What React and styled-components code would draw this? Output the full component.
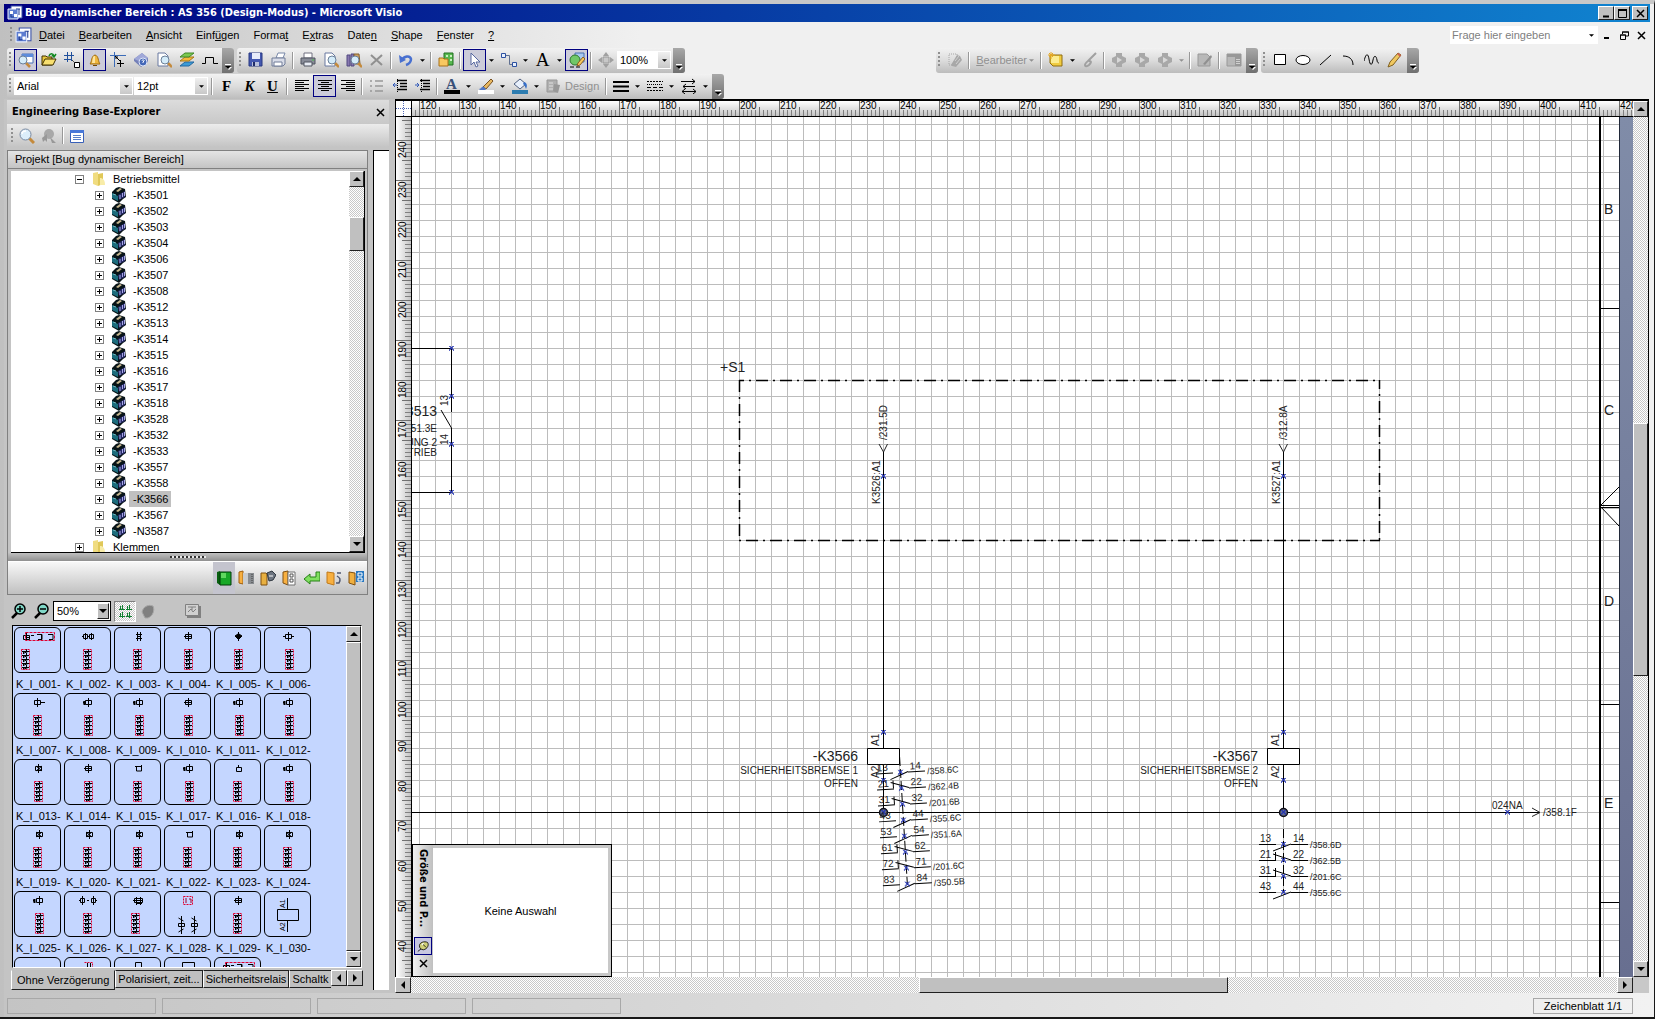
import React from 'react';
import styled, { createGlobalStyle, css } from 'styled-components';

const UI_FONT = '"Liberation Sans", Arial, sans-serif';
const BOLD_FONT = '"DejaVu Sans Condensed", Tahoma, "DejaVu Sans", sans-serif';

const menus = [
  '&Datei', '&Bearbeiten', '&Ansicht', 'Einf&ügen', 'Forma&t',
  'E&xtras', 'Date&n', '&Shape', '&Fenster', '&?',
];

const devices = [
  '-K3501', '-K3502', '-K3503', '-K3504', '-K3506', '-K3507', '-K3508', '-K3512',
  '-K3513', '-K3514', '-K3515', '-K3516', '-K3517', '-K3518', '-K3528', '-K3532',
  '-K3533', '-K3557', '-K3558', '-K3566', '-K3567', '-N3587',
];

// [label, symbol on top, x of symbol, x of the contact block]
const shapes = [
  ['K_I_001-', 'bus', 0, 7], ['K_I_002-', 'double', 24, 19], ['K_I_003-', 'hash', 25, 19],
  ['K_I_004-', 'coil', 24, 20], ['K_I_005-', 'solid', 24, 20], ['K_I_006-', 'wide', 24, 21],
  ['K_I_007-', 'right', 23, 19], ['K_I_008-', 'left', 24, 20], ['K_I_009-', 'left', 25, 21],
  ['K_I_010-', 'coil', 24, 20], ['K_I_011-', 'left', 25, 21], ['K_I_012-', 'left', 25, 21],
  ['K_I_013-', 'cross', 24, 20], ['K_I_014-', 'coil', 24, 20], ['K_I_015-', 'cup', 24, 19],
  ['K_I_017-', 'left', 25, 21], ['K_I_016-', 'box', 24, 19], ['K_I_018-', 'left', 25, 21],
  ['K_I_019-', 'cross', 25, 19], ['K_I_020-', 'cross', 25, 19], ['K_I_021-', 'cross', 25, 19],
  ['K_I_022-', 'cup', 25, 19], ['K_I_023-', 'cross', 25, 19], ['K_I_024-', 'cross', 25, 19],
  ['K_I_025-', 'left', 25, 21], ['K_I_026-', 'pair', 24, 19], ['K_I_027-', 'motor', 24, 17],
  ['K_I_028-', 'lamps', 24, 0], ['K_I_029-', 'coil', 24, 19], ['K_I_030-', 'relay', 0, 0],
  ['', 'none', 0, 0], ['', 'redcoil', 25, 0], ['', 'tall', 24, 0], ['', 'flat', 24, 0], ['', 'bus', 0, 0],
];

const contactsA = [
  ['13', '14', 'no', '/358.6C'], ['21', '22', 'nc', '/362.4B'], ['31', '32', 'nc', '/201.6B'],
  ['43', '44', 'no', '/355.6C'], ['53', '54', 'no', '/351.6A'], ['61', '62', 'nc', ''],
  ['72', '71', 'nc', '/201.6C'], ['83', '84', 'no', '/350.5B'],
];

const contactsB = [
  ['13', '14', 'no', '/358.6D'], ['21', '22', 'nc', '/362.5B'],
  ['31', '32', 'nc', '/201.6C'], ['43', '44', 'no', '/355.6C'],
];

const range = (from, to, step) => {
  const out = [];
  for (let v = from; step > 0 ? v <= to : v >= to; v += step) out.push(v);
  return out;
};

const gear = (
  <>
    <path d="M5 1h6v3l4 2v4l-4 2v3H5v-3L1 10V6l4-2z" fill="#a8a8a8" />
    <path d="M6 5l5 3-5 3z" fill="#d8d8d8" />
  </>
);

const lens = (x, y) => (
  <>
    <path d={`M${x + 3} ${y + 3}l4 4`} stroke="#c48a3c" strokeWidth="2.5" />
    <circle cx={x} cy={y} r="4" fill="#d4ecfa" stroke="#6c8098" />
  </>
);

const alignLines = (widths, place) => widths.map((w, i) => {
  const x = { left: 1, center: 8 - w / 2, right: 15 - w }[place];
  return <path key={i} d={`M${x} ${2.5 + i * 2}h${w}`} stroke="#000" />;
});

const icons = {
  app: (
    <>
      <path d="M4 1h11v12H4z" fill="#fff" stroke="#3850a8" />
      <path d="M1 4h10v10H1z" fill="#5c7cd0" stroke="#e8eefc" />
      <path d="M3 6h3v3H3zM7 9h3v3H7z" fill="#fff" />
      <path d="M9 4h4M12 4v6M4 9v3h3" stroke="#203c90" fill="none" />
    </>
  ),
  explorer: (
    <>
      <path d="M4 2h11v9H4z" fill="#fff" stroke="#4870b8" />
      <path d="M4 2h11v3H4z" fill="#5c8cdc" />
      {lens(5, 8)}
    </>
  ),
  open: (
    <>
      <path d="M1 4h4l1 1h5v8H1z" fill="#e8c83c" stroke="#403000" />
      <path d="M1 13l3-6h11l-3 6z" fill="#f8e070" stroke="#403000" />
      <path d="M8 4c1-3 4-3 5 0M11 3l2 2 2-3" fill="none" stroke="#108820" strokeWidth="1.5" />
    </>
  ),
  grid: (
    <>
      <path d="M0 3.5h10M0 7.5h8M3.5 0v10M7.5 0v9" stroke="#20509c" />
      <path d="M8 8l3 3" stroke="#000" strokeDasharray="1 1" />
      <path d="M10.5 10.5h5v5h-5z" fill="#fff" stroke="#000" />
    </>
  ),
  bell: (
    <>
      <path d="M3 12c2-2 1-8 5-9 4 1 3 7 5 9z" fill="#f0b840" stroke="#a06c10" />
      <path d="M6 5c1-1 1-1 2-1v7H5z" fill="#fce4a0" />
      <path d="M6 13h4v1H6z" fill="#704800" />
    </>
  ),
  snap: (
    <>
      <path d="M0 3.5h16M4.5 0v15" stroke="#3c6cb8" />
      <path d="M5 4l5 5M6 7V5h2" stroke="#000" fill="none" />
      <path d="M7 11.5h7M10.5 8v7" stroke="#000" />
    </>
  ),
  help: (
    <>
      <path d="M1 7l8-6 6 5v4l-7 5-7-6z" fill="#7480b8" />
      <path d="M1 7l8-6 6 5-7 4z" fill="#a0a8d8" />
      <circle cx="10" cy="10" r="4" fill="#4468b8" stroke="#dce4f8" />
      <path d="M9 9c0-2 3-1 2 0l-1 1v1" stroke="#fff" fill="none" />
    </>
  ),
  preview: (
    <>
      <path d="M2 1h7l3 3v10H2z" fill="#fff" stroke="#6878a0" />
      {lens(9, 8)}
    </>
  ),
  layers: (
    <>
      <path d="M1 14l5-4h9l-5 4z" fill="#3c9cd8" stroke="#2468a0" />
      <path d="M1 9l5-4h9l-5 4z" fill="#f4b83c" stroke="#a87818" />
      <path d="M1 5l5-4h9l-5 4z" fill="#7cc850" stroke="#408828" />
    </>
  ),
  pulse: <path d="M0 11.5h3.5v-6h8v6H16" fill="none" stroke="#000" />,
  save: (
    <>
      <path d="M1 1h13v13H1z" fill="#4458b0" stroke="#283880" />
      <path d="M4 1h8v6H4z" fill="#e8ecfa" />
      <path d="M4 10h7v4H4z" fill="#b8c0dc" />
      <path d="M5 10h2v4H5z" fill="#202c68" />
    </>
  ),
  printPage: (
    <>
      <path d="M5 6l2-5h7l-2 5z" fill="#fff" stroke="#7888a8" />
      <path d="M1 6h13v6l-2 2H1z" fill="#d8dce8" stroke="#707c98" />
      <path d="M3 10h8v4H3z" fill="#fff" stroke="#707c98" />
    </>
  ),
  printer: (
    <>
      <path d="M4 1h8v5H4z" fill="#fff" stroke="#707080" />
      <path d="M1 6h14v6H1z" fill="#888c98" stroke="#505460" />
      <path d="M4 10h8v4H4z" fill="#e8ecf4" stroke="#505460" />
      <path d="M12 8h2" stroke="#48c048" />
    </>
  ),
  research: (
    <>
      <path d="M1 3h3v11H1zM5 2h3v12H5z" fill="#8878b0" stroke="#504880" />
      <path d="M8 2h5l1 10H9z" fill="#d0a060" stroke="#806030" />
      {lens(9, 8)}
    </>
  ),
  cross: <path d="M2 3l11 10M13 3L2 13" stroke="#909090" strokeWidth="2" />,
  undo: (
    <>
      <path d="M4 8c2-4 8-5 9-1 0 3-2 5-5 6" fill="none" stroke="#4870d0" strokeWidth="2.5" />
      <path d="M1 3l1 8 6-3z" fill="#4870d0" />
    </>
  ),
  shapesWindow: (
    <>
      <path d="M6 1h9v12H6z" fill="#58b850" stroke="#207020" />
      <path d="M8 3h2v2H8zM12 3h2v2h-2zM12 7h2v2h-2z" fill="#c8f0c0" />
      <path d="M1 6h4l1 1h4v7H1z" fill="#f8c860" stroke="#a87018" />
    </>
  ),
  pointer: <path d="M4 1v12l3-3 2 5 2-1-2-4h4z" fill="#fff" stroke="#5868a0" />,
  connector: (
    <>
      <path d="M4 3.5h4.5v9H12" fill="none" stroke="#607090" />
      <path d="M.5 1.5h4v4h-4zM11.5 10.5h4v4h-4z" fill="#e8f0fc" stroke="#2c50a0" />
    </>
  ),
  drawTools: (
    <>
      <path d="M6 1h9v9H6z" fill="#a8c8f0" stroke="#4870b0" />
      <circle cx="6" cy="8" r="5" fill="#70c868" stroke="#307830" />
      <path d="M8 14l1-3 5-6 2 2-5 6z" fill="#f4c860" stroke="#906020" />
      <path d="M1 15h12" stroke="#000" strokeDasharray="4 2" />
    </>
  ),
  move: (
    <>
      <path d="M8 0l3 4H5zM8 16l3-4H5zM0 8l4-3v6zM16 8l-4-3v6z" fill="#a0a0a0" />
      <path d="M5 5h6v6H5z" fill="#c8c8c8" stroke="#989898" />
    </>
  ),
  stencil: (
    <>
      <path d="M2 2h8v11H2z" fill="none" stroke="#a8a8a8" strokeDasharray="1 1" />
      <path d="M4 13l6-10 3 1 2 4-6 7-4-1z" fill="#a8a8a8" />
      <path d="M8 9l4-5M9 12l4-5" stroke="#d0d0d0" />
    </>
  ),
  note: (
    <>
      <path d="M2 3h12v11H5l-3-3z" fill="#f0cc40" stroke="#906c10" />
      <path d="M3 4h8v7H3z" fill="#fcec90" />
      <path d="M3 0v7M0 3h7M1 1l4 4M5 1L1 5" stroke="#e8a820" />
    </>
  ),
  ink: <path d="M14 1L6 9c-5 4-3 7 1 4 2-2 3-4 0-4" fill="none" stroke="#a0a0a0" strokeWidth="2" />,
  prev: gear,
  editPage: (
    <>
      <path d="M1 2h9l3 3v9H1z" fill="#b8b8b8" stroke="#989898" />
      <path d="M6 12l8-9 1 2-7 8z" fill="#909090" />
    </>
  ),
  pane: (
    <>
      <path d="M1 2h14v12H1z" fill="#b8b8b8" stroke="#989898" />
      <path d="M9 5h6v9H9zM1 2h14v3H1z" fill="#989898" />
      <path d="M10 7.5h4M10 9.5h4M10 11.5h4" stroke="#d0d0d0" />
    </>
  ),
  rect: <path d="M2.5 2.5h11v10h-11z" fill="#fff" stroke="#000" />,
  ellipse: <ellipse cx="8" cy="8" rx="7" ry="4.5" fill="#fff" stroke="#000" />,
  line: <path d="M2 13L13 3" stroke="#000" />,
  arc: <path d="M2 4c6 0 10 3 10 9" fill="none" stroke="#000" />,
  wave: <path d="M0 9c2-8 4-8 5-2 1 7 3 7 4 1 1-5 3-5 4 0 0 2 1 3 2 3" fill="none" stroke="#000" />,
  pencil: (
    <>
      <path d="M1 15l2-5 8-9 3 2-8 10z" fill="#f0c860" stroke="#806020" />
      <path d="M10 2l1-1 3 2-1 2z" fill="#d06050" />
    </>
  ),
  alignLeft: alignLines([14, 9, 14, 9, 14, 9], 'left'),
  alignCenter: alignLines([14, 8, 14, 8, 14, 8], 'center'),
  alignRight: alignLines([14, 9, 14, 9, 14, 9], 'right'),
  bullets: <path d="M1 3h2M1 8h2M1 13h2M6 3h8M6 8h8M6 13h8" stroke="#989898" strokeWidth="1.5" />,
  outdent: (
    <>
      <path d="M5 2.5h10M8 5.5h7M8 8.5h7M5 11.5h10" stroke="#000" strokeWidth="1.5" />
      <path d="M5.5 1v14" stroke="#000" strokeDasharray="1 1" />
      <path d="M5 7H1M3 5L1 7l2 2" stroke="#3058b8" fill="none" />
    </>
  ),
  indent: (
    <>
      <path d="M5 2.5h10M8 5.5h7M8 8.5h7M5 11.5h10" stroke="#000" strokeWidth="1.5" />
      <path d="M6.5 1v14" stroke="#000" strokeDasharray="1 1" />
      <path d="M0 7h4M2 5l2 2-2 2" stroke="#3058b8" fill="none" />
    </>
  ),
  brush: (
    <>
      <path d="M5 9l8-8 2 2-7 8z" fill="#e8b860" stroke="#785020" />
      <path d="M1 11c3 0 2-3 5-2l2 2c-2 2-5 2-7 0z" fill="#5078c8" />
      <path d="M0 12h16v4H0z" fill="#fff" />
    </>
  ),
  bucket: (
    <>
      <path d="M2 6l6-5 6 5-6 5z" fill="#e8f0fc" stroke="#506080" />
      <path d="M12 4c4 1 3 5 2 7-1-2-1-4-3-5z" fill="#3870c8" />
      <path d="M0 12h16v4H0z" fill="#2c7cb0" />
    </>
  ),
  design: (
    <>
      <path d="M1 2h10v12H1z" fill="#b0b0b0" stroke="#989898" />
      <path d="M3 5h4M3 8h4M3 11h4" stroke="#e0e0e0" />
      <path d="M8 6l6 1-2 8-5-2z" fill="#989898" />
    </>
  ),
  weights: <path d="M0 4h16M0 8.5h16M0 13h16" stroke="#000" strokeWidth="2" />,
  dashes: (
    <>
      <path d="M0 3.5h16M0 12.5h16" stroke="#000" strokeDasharray="2 1" />
      <path d="M0 6.5h16" stroke="#000" strokeDasharray="1 1" />
      <path d="M0 9.5h16" stroke="#000" strokeDasharray="4 2" />
    </>
  ),
  arrows: (
    <path
      d="M0 3.5h14M11 1l3 2.5L11 6M2 8.5h12M5 6L2 8.5 5 11M1 13.5h14M12 11l3 2.5-3 2.5M4 11l-3 2.5L4 16"
      fill="none" stroke="#000"
    />
  ),
  find: (
    <>
      <path d="M10 10l5 5" stroke="#c48a3c" strokeWidth="3" />
      <circle cx="6.5" cy="6.5" r="5.5" fill="#dceefa" stroke="#7888a0" />
      <path d="M3 6c0-2 2-3 4-3" fill="none" stroke="#fff" strokeWidth="1.5" />
    </>
  ),
  bird: (
    <>
      <circle cx="8" cy="6" r="5" fill="#a8a8a8" />
      <path d="M1 10l5-4v8l-2-2-2 2zM9 9l6 6h-4z" fill="#989898" />
    </>
  ),
  list: (
    <>
      <path d="M1.5 2.5h13v12h-13z" fill="#fff" stroke="#3860b8" />
      <path d="M1 2h14v3H1z" fill="#4878d8" />
      <path d="M4 7.5h8M4 9.5h8M4 11.5h8" stroke="#5880c8" />
    </>
  ),
  folder: (
    <>
      <path d="M2 2l5-1v14l-5-2z" fill="#f0dc80" />
      <path d="M7 3l5-1v11l-5 2z" fill="#e0c858" />
      <path d="M9 7c3 0 5 2 5 7H9z" fill="#f8eca8" />
    </>
  ),
  device: (
    <>
      <path d="M1 5l4-4 3-1 6 2 1 8-3 2-4 4-7-4z" fill="#081418" />
      <path d="M1 6l6 3v5l-6-3z" fill="#1c6c7c" />
      <path d="M7 8l7-4v6l-6 3z" fill="#282c68" />
      <path d="M9 8v4M11.5 6v4M13.5 5v4" stroke="#a8a8e8" />
      <path d="M5 4l4-3 2 1-4 3z" fill="#c8b890" />
      <path d="M2 7l3 1" stroke="#70b8c0" />
    </>
  ),
  greenBook: (
    <>
      <path d="M1 2l3-1v14l-3-2z" fill="#086010" />
      <path d="M4 2h11v13H4z" fill="#18a828" stroke="#003c08" />
      <path d="M5 3h5v5H5z" fill="#60d860" />
    </>
  ),
  bookWipe: (
    <>
      <path d="M1 2l4-1v13l-4-1z" fill="#f8b040" stroke="#a06010" />
      <path d="M5 3h11v11H5z" fill="#888c90" />
      <path d="M5 3h5v11H5z" fill="#c8ccd0" />
      <path d="M14 4v9" stroke="#404040" strokeDasharray="1 1" />
    </>
  ),
  bookGear: (
    <>
      <path d="M1 3h5l1 1v11H1z" fill="#e8b040" stroke="#805010" />
      <path d="M7 3l5-2 4 4-3 5-4 1z" fill="#6c7480" stroke="#303840" />
      <path d="M9 6h4" stroke="#fff" />
    </>
  ),
  bookPlan: (
    <>
      <path d="M1 2l5-1v14l-5-2z" fill="#f8b040" stroke="#805010" />
      <path d="M6 2h7v13H6z" fill="#fff" stroke="#707070" />
      <path d="M8 4h3v3H8zM8 9h3v3H8z" fill="none" stroke="#505050" />
    </>
  ),
  back: <path d="M0 9l6-5v3h6V2h4v9H6v3z" fill="#80e060" stroke="#288018" />,
  bookBottle: (
    <>
      <path d="M1 2l7 1v12l-7-2z" fill="#f8b040" stroke="#c07818" />
      <path d="M11 3h4M11 6c3 2 4 3 2 7h-3" fill="none" stroke="#505870" strokeWidth="1.5" />
    </>
  ),
  bookBlue: (
    <>
      <path d="M1 2l6 1v12l-6-2z" fill="#f0b040" stroke="#805010" />
      <path d="M8 1h8v11H8z" fill="#2878c0" />
      <path d="M10 3h4v3h-4zM10 8h4v3h-4z" fill="none" stroke="#fff" />
    </>
  ),
  zoomIn: (
    <>
      <path d="M6 10l-5 5" stroke="#000" strokeWidth="2.5" />
      <circle cx="9" cy="6" r="5" fill="#80d8c8" stroke="#000" strokeWidth="1.5" />
      <path d="M6 6h6M9 3v6" stroke="#000" strokeWidth="1.5" />
    </>
  ),
  zoomOut: (
    <>
      <path d="M6 10l-5 5" stroke="#000" strokeWidth="2.5" />
      <circle cx="9" cy="6" r="5" fill="#80d8c8" stroke="#000" strokeWidth="1.5" />
      <path d="M6 6h6" stroke="#000" strokeWidth="1.5" />
    </>
  ),
  tiles: (
    <path
      d="M5.5 2v5M2 6.5h6M3.5 3v4M12.5 2v5M9 6.5h6M10.5 3v4M5.5 9v6M2 13.5h6M3.5 10v4M12.5 9v6M9 13.5h6M10.5 10v4"
      stroke="#108030"
    />
  ),
  rock: <path d="M2 9c1-5 6-8 11-6 2 4 0 10-5 12H5z" fill="#808080" stroke="#a8a8a8" />,
  stamp: (
    <>
      <path d="M2 3h14v12H2z" fill="#808080" />
      <path d="M.5 1.5h13v11H.5z" fill="#d0d0d0" stroke="#808080" />
      <path d="M3 4h8M3 9l3-3 2 3 3-3M7 4v3" stroke="#808080" fill="none" />
    </>
  ),
  pin: (
    <>
      <path d="M3 7c0-4 6-6 10-4 2 3 0 8-5 9-3 0-5-2-5-5z" fill="#d0d078" stroke="#000" />
      <path d="M1 14l4-3M7 5l4 4" stroke="#000" />
      <path d="M6 6l2-2" stroke="#fff" strokeWidth="1.5" />
    </>
  ),
};

function Icon({ name, size = 16 }) {
  return (
    <svg width={size} height={size} viewBox="0 0 16 16" aria-hidden="true">
      {icons[name]}
    </svg>
  );
}

const arrowPaths = {
  up: 'M4 0l4 4H0z',
  down: 'M0 0h8L4 4z',
  left: 'M0 4l4-4v8z',
  right: 'M0 0l4 4-4 4z',
};

function Arrow({ dir = 'down', small }) {
  const wide = dir === 'up' || dir === 'down';
  const k = small ? 0.65 : 1;
  const w = wide ? 8 : 4;
  const h = wide ? 4 : 8;
  return (
    <svg width={Math.round(w * k)} height={Math.round(h * k)} viewBox={`0 0 ${w} ${h}`} aria-hidden="true">
      <path d={arrowPaths[dir]} fill="currentColor" />
    </svg>
  );
}

function CloseGlyph() {
  return (
    <svg width="9" height="9" viewBox="0 0 9 9" aria-hidden="true">
      <path d="M1 1l7 7M8 1L1 8" stroke="#000" strokeWidth="1.5" />
    </svg>
  );
}

function ExpanderGlyph({ open }) {
  return (
    <svg width="7" height="7" aria-hidden="true">
      <path d={open ? 'M1 3.5h5' : 'M1 3.5h5M3.5 1v5'} stroke="#000" />
    </svg>
  );
}

function Mnemonic({ text }) {
  const at = text.indexOf('&');
  return (
    <>
      {text.slice(0, at)}
      <u>{text[at + 1]}</u>
      {text.slice(at + 2)}
    </>
  );
}

function Tool({ name, label, boxed, drop, disabled, children }) {
  return (
    <>
      <ToolButton type="button" aria-label={label || name} $boxed={boxed} disabled={disabled}>
        {children || <Icon name={name} />}
      </ToolButton>
      {drop && (
        <DropButton type="button" aria-label={`${label || name} options`} disabled={disabled}>
          <Arrow small />
        </DropButton>
      )}
    </>
  );
}

function Combo({ label, value, width, plain }) {
  return (
    <ComboBox $width={width} $plain={plain}>
      <select aria-label={label} defaultValue={value}>
        <option>{value}</option>
      </select>
      <ComboArrow $raised={plain}><Arrow small={!plain} /></ComboArrow>
    </ComboBox>
  );
}

function Overflow() {
  return (
    <OverflowButton type="button" aria-label="More buttons">
      <svg width="7" height="7" viewBox="0 0 7 7" aria-hidden="true">
        <path d="M0 .5h6" stroke="#fff" />
        <path d="M1 3h6L4 6z" fill="#fff" />
        <path d="M0 2h6L3 5z" fill="#000" />
      </svg>
    </OverflowButton>
  );
}

function ScrollBar({ horizontal, before, thumb, after }) {
  return (
    <Scroll $horizontal={horizontal}>
      <ScrollButton type="button" aria-label="Scroll back"><Arrow dir={horizontal ? 'left' : 'up'} /></ScrollButton>
      <ScrollGap $grow={before} />
      <ScrollThumb $grow={thumb} />
      <ScrollGap $grow={after} />
      <ScrollButton type="button" aria-label="Scroll on"><Arrow dir={horizontal ? 'right' : 'down'} /></ScrollButton>
    </Scroll>
  );
}

function CoilSymbol({ kind, x }) {
  const left = x - 2.5;
  const mid = x + 0.5;
  const body = <path d={`M${left} 7.5h6v4h-6z`} />;
  const stem = <path d={`M${mid} 5v9`} />;
  switch (kind) {
    case 'bus':
      return (
        <>
          <path d="M9.5 8.5h6v4h-6zM12.5 6v8M11 10.5h5M17 8.5h3M23 7.5h5v5h-4M34 7.5h5v5h-4M27.5 8v6" />
          <path d="M11.5 5.5h29v8h-29z" stroke="#e00030" strokeDasharray="3 1" />
        </>
      );
    case 'double': return <path d="M18 9.5h2M19.5 7.5h4v4h-4zM25.5 7.5h4v4h-4zM21.5 6v7M27.5 6v7M23 9.5h2" />;
    case 'hash': return <path d="M22 7.5h6M22 11.5h6M23.5 5v9M26.5 5v9M24 9.5h3" />;
    case 'solid': return <><path d="M21 9l3-2h1l3 2-3 3h-1z" fill="#000" />{stem}</>;
    case 'wide': return <>{body}{stem}<path d="M19 9.5h2M28 9.5h2" /></>;
    case 'right': return <>{body}{stem}<path d="M27 9.5h4" /></>;
    case 'left': return <>{body}{stem}<path d="M19 9.5h2M20.5 8v4" strokeWidth="2" /></>;
    case 'cross': return <>{body}{stem}<path d="M22 7l6 5M28 7l-6 5" /></>;
    case 'cup': return <path d={`M${x - 1.5} 7v5h5V6M${x - 3} 7.5h6`} />;
    case 'box': return <path d={`M${x - 1.5} 8.5h5v4h-5zM${mid} 6v2`} />;
    case 'pair': return <path d="M16.5 7.5h4v4h-4zM27.5 7.5h4v4h-4zM18.5 5v9M29.5 5v9M15 9.5h1M23 9.5h2M32 9.5h1" />;
    case 'motor': return <path d="M20.5 7.5h8v4h-8zM22.5 6v8M26.5 6v8M19 9.5h10M22 12.5h6" />;
    case 'coil': return <>{body}{stem}<path d={`M${x - 4} 9.5h8`} /></>;
    case 'redcoil': return <><path d="M21 10.5h8v4M23.5 6v9M26.5 6v9" /><path d="M20.5 5.5h8v10" stroke="#e00030" strokeDasharray="2 1" /></>;
    case 'tall': return <path d="M21.5 16V5.5h6V16" />;
    case 'flat': return <path d="M18.5 16V5.5h12V16" />;
    default: return null;
  }
}

function ShapePreview({ kind, x, blockX }) {
  return (
    <svg width="45" height="44" viewBox="1 1 45 44" fill="none" stroke="#000" aria-hidden="true">
      <CoilSymbol kind={kind} x={x} />
      {kind === 'lamps' && (
        <>
          <path d="M19.5 5.5h9v8h-9z" stroke="#e00030" strokeDasharray="2 1" />
          <path d="M22 7v5M25 8h2v4" stroke="#a00028" />
          {[17.5, 30.5].map((cx) => (
            <path key={cx} d={`M${cx} 25v18M${cx - 3} 32.5h6v3h-6zM${cx - 3} 27l5 3M${cx + 2} 38l-5 3`} />
          ))}
        </>
      )}
      {kind === 'relay' && (
        <>
          <path d="M13.5 18.5h21v11h-21zM23.5 7v11M23.5 30v11" />
          <RelayLabel x="-17" y="21">A1</RelayLabel>
          <RelayLabel x="-40" y="21">A2</RelayLabel>
        </>
      )}
      {blockX > 0 && (
        <>
          {[0, 4, 8, 12, 16].map((dy) => (
            <path key={dy} d={`M${blockX + 1} ${24.5 + dy}h7M${blockX + 2} ${26.5 + dy}l5-2`} />
          ))}
          <path d={`M${blockX + 5.5} 22v21M${blockX + 2.5} 24v18`} strokeDasharray="3 1" />
          <path d={`M${blockX + 0.5} 22.5h8v20h-8z`} stroke="#e00030" strokeDasharray="2 1" />
        </>
      )}
    </svg>
  );
}

const Mark = ({ x, y }) => (
  <path
    d={`M${x - 2} ${y - 2}l5 5M${x + 3} ${y - 2}l-5 5M${x - 1} ${y - 2}l4 4M${x + 2} ${y - 2}l-4 4`}
    stroke="#2434b0" strokeWidth="0.8"
  />
);

function Contacts({ rows, transform }) {
  return (
    <g transform={transform}>
      <path d={`M.5 -15v${rows.length * 16}`} stroke="#000" strokeDasharray="9 3" />
      {rows.map(([a, b, kind, target], i) => {
        const y = i * 16;
        return (
          <g key={a}>
            <path d={`M-24 ${y + 0.5}h17M8 ${y + 0.5}h17`} stroke="#000" />
            {kind === 'no'
              ? <path d={`M8 ${y}L-10 ${y + 7}`} stroke="#000" />
              : <path d={`M-7.5 ${y}v-8M8 ${y}L-10 ${y - 6}`} stroke="#000" />}
            <Mark x={0} y={y} />
            <SheetText x="-23" y={y - 2}>{a}</SheetText>
            <SheetText x="10" y={y - 2}>{b}</SheetText>
            <SheetText x="27" y={y + 4} $small>{target}</SheetText>
          </g>
        );
      })}
    </g>
  );
}

// One coil column, drawn around its wire at x = 0 with sheet heights for y
function Coil({ x, source, wire, name, title }) {
  return (
    <g transform={`translate(${x} 0)`}>
      <path d="M-4 444l4.5 8 4-8" fill="none" stroke="#222" />
      <path d="M.5 452v296M.5 764v48" stroke="#000" />
      <path d="M-15.5 748.5h32v16h-32z" fill="#fff" stroke="#000" />
      <SheetText transform="translate(4 440) rotate(-90)">{source}</SheetText>
      <SheetText transform="translate(-3 504) rotate(-90)">{wire}</SheetText>
      <SheetText transform="translate(-4 746) rotate(-90)">A1</SheetText>
      <SheetText transform="translate(-4 778) rotate(-90)">A2</SheetText>
      <SheetText x="-25" y="761" textAnchor="end" $large>{name}</SheetText>
      <SheetText x="-25" y="774" textAnchor="end">{title}</SheetText>
      <SheetText x="-25" y="787" textAnchor="end">OFFEN</SheetText>
      <circle cx=".5" cy="812.5" r="4" fill="#606890" stroke="#101018" strokeWidth="1.5" />
      <Mark x={0} y={476} />
      <Mark x={0} y={732} />
      <Mark x={0} y={780} />
      <Mark x={0} y={812} />
    </g>
  );
}

function Sheet() {
  return (
    <SheetSvg width="1207" height="1400" viewBox="412 117 1207 1400">
      <defs>
        <pattern id="grid" x="419" y="124" width="16" height="16" patternUnits="userSpaceOnUse">
          <path d="M.5 0v16M0 .5h16" stroke="#bcbcbc" />
        </pattern>
      </defs>
      <rect x="412" y="117" width="1207" height="1400" fill="#fff" />
      <rect x="412" y="117" width="1207" height="1400" fill="url(#grid)" />

      <path d="M1600 117v1400" stroke="#000" strokeWidth="2" />
      <path d="M1600 308.5h19M1600 704.5h19M1600 902.5h19M1600 505.5h19M1600 507.5h19" stroke="#000" />
      <path d="M1619 487l-19 19 19 20" fill="none" stroke="#000" />
      <SheetText x="1604" y="214" $large>B</SheetText>
      <SheetText x="1604" y="415" $large>C</SheetText>
      <SheetText x="1604" y="606" $large>D</SheetText>
      <SheetText x="1604" y="808" $large>E</SheetText>

      <path d="M412 348.5h39.5V412M441 410l10.5 18V492.5H412" fill="none" stroke="#000" />
      <SheetText x="437" y="416" textAnchor="end" $large>-K3513</SheetText>
      <SheetText x="437" y="432" textAnchor="end">/351.3E</SheetText>
      <SheetText x="437" y="446" textAnchor="end">RICHTUNG 2</SheetText>
      <SheetText x="437" y="456" textAnchor="end">BETRIEB</SheetText>
      <SheetText transform="translate(448 406) rotate(-90)">13</SheetText>
      <SheetText transform="translate(448 445) rotate(-90)">14</SheetText>
      {[348, 396, 444, 492].map((y) => <Mark key={y} x={451} y={y} />)}

      <g stroke="#000" strokeWidth="1.5" strokeDasharray="12 5 2 5">
        <path d="M739 380.5h641" strokeDashoffset="7" />
        <path d="M739 540.5h641" strokeDashoffset="17" />
        <path d="M739.5 380v161" />
        <path d="M1379.5 380v161" strokeDashoffset="3" />
      </g>
      <SheetText x="720" y="372" $large>+S1</SheetText>

      <path d="M412 812.5h1128" stroke="#000" />
      <path d="M1532 808l8 4.5-8 4" fill="none" stroke="#222" />
      <SheetText x="1492" y="809">024NA</SheetText>
      <SheetText x="1543" y="816">/358.1F</SheetText>
      <Mark x={1507} y={812} />

      <Coil x={883} source="/231.5D" wire="K3526:A1" name="-K3566" title="SICHERHEITSBREMSE 1" />
      <Coil x={1283} source="/312.8A" wire="K3527:A1" name="-K3567" title="SICHERHEITSBREMSE 2" />
      <Contacts rows={contactsA} transform="translate(900 772) rotate(-3.5)" />
      <Contacts rows={contactsB} transform="translate(1283 844)" />
    </SheetSvg>
  );
}

function Toolbars() {
  return (
    <ToolArea>
      <ToolRow>
        <ToolBar>
          <Grip />
          <Tool name="explorer" boxed />
          <Tool name="open" />
          <Tool name="grid" />
          <Tool name="bell" boxed />
          <Tool name="snap" />
          <Tool name="help" />
          <Tool name="preview" />
          <Tool name="layers" />
          <Tool name="pulse" />
          <Overflow />
        </ToolBar>
        <ToolBar>
          <Grip />
          <Tool name="save" />
          <Tool name="printPage" />
          <Separator />
          <Tool name="printer" />
          <Tool name="preview" />
          <Tool name="research" />
          <Tool name="cross" disabled />
          <Separator />
          <Tool name="undo" drop />
          <Separator />
          <Tool name="shapesWindow" />
          <Separator />
          <Tool name="pointer" boxed drop />
          <Tool name="connector" drop />
          <Tool label="Text" drop><Letter $size={19}>A</Letter></Tool>
          <Tool name="drawTools" boxed />
          <Separator />
          <Tool name="move" disabled />
          <Combo label="Zoom" value="100%" width={54} />
          <Overflow />
        </ToolBar>
        <Push />
        <ToolBar>
          <Grip />
          <Tool name="stencil" disabled />
          <Separator />
          <TextButton type="button" disabled><Mnemonic text="&Bearbeiter" /><Arrow small /></TextButton>
          <Separator />
          <Tool name="note" drop />
          <Tool name="ink" disabled />
          <Separator />
          <Tool name="prev" disabled />
          <Tool name="prev" label="next" disabled />
          <Tool name="prev" label="reject" disabled drop />
          <Separator />
          <Tool name="editPage" disabled />
          <Separator />
          <Tool name="pane" disabled />
          <Overflow />
        </ToolBar>
        <ToolBar $last>
          <Grip />
          <Tool name="rect" />
          <Tool name="ellipse" />
          <Tool name="line" />
          <Tool name="arc" />
          <Tool name="wave" />
          <Tool name="pencil" />
          <Overflow />
        </ToolBar>
      </ToolRow>
      <ToolRow>
        <ToolBar>
          <Grip />
          <Combo label="Font" value="Arial" width={119} />
          <Combo label="Font size" value="12pt" width={74} />
          <Separator />
          <Tool label="Bold"><Letter $bold>F</Letter></Tool>
          <Tool label="Italic"><Letter $bold $italic>K</Letter></Tool>
          <Tool label="Underline"><Letter $bold><u>U</u></Letter></Tool>
          <Separator />
          <Tool name="alignLeft" />
          <Tool name="alignCenter" boxed />
          <Tool name="alignRight" />
          <Separator />
          <Tool name="bullets" disabled />
          <Tool name="outdent" />
          <Tool name="indent" />
          <Separator />
          <Tool label="Font color" drop><ColorLetter>A</ColorLetter></Tool>
          <Tool name="brush" drop />
          <Tool name="bucket" drop />
          <TextButton type="button" disabled><Icon name="design" /><Mnemonic text="Desi&gn" /></TextButton>
          <Separator />
          <Tool name="weights" drop />
          <Tool name="dashes" drop />
          <Tool name="arrows" drop />
          <Overflow />
        </ToolBar>
      </ToolRow>
    </ToolArea>
  );
}

function Explorer() {
  return (
    <Sidebar>
      <PanelHeader>
        <PanelTitle>Engineering Base-Explorer</PanelTitle>
        <PlainButton type="button" aria-label="Close panel"><CloseGlyph /></PlainButton>
      </PanelHeader>
      <PanelTools>
        <Grip />
        <Tool name="find" />
        <Tool name="bird" disabled />
        <Separator />
        <Tool name="list" />
      </PanelTools>
      <SidebarBody>
        <SidebarMain>
          <TreePane>
            <ProjectTitle>Projekt [Bug dynamischer Bereich]</ProjectTitle>
            <TreeFrame>
              <Tree>
                <TreeRow>
                  <Expander type="button" aria-label="Collapse"><ExpanderGlyph open /></Expander>
                  <Icon name="folder" />
                  <TreeLabel>Betriebsmittel</TreeLabel>
                </TreeRow>
                {devices.map((name) => (
                  <TreeRow key={name} $nested>
                    <Expander type="button" aria-label="Expand"><ExpanderGlyph /></Expander>
                    <Icon name="device" />
                    <TreeLabel $selected={name === '-K3566'}>{name}</TreeLabel>
                  </TreeRow>
                ))}
                <TreeRow>
                  <Expander type="button" aria-label="Expand"><ExpanderGlyph /></Expander>
                  <Icon name="folder" />
                  <TreeLabel>Klemmen</TreeLabel>
                </TreeRow>
              </Tree>
              <ScrollBar before={30} thumb={33} after={287} />
            </TreeFrame>
            <Splitter />
            <BookBar>
              <Tool name="greenBook" />
              <Tool name="bookWipe" />
              <Tool name="bookGear" />
              <Tool name="bookPlan" />
              <Tool name="back" />
              <Tool name="bookBottle" />
              <Tool name="bookBlue" />
            </BookBar>
          </TreePane>
          <ShapeTools>
            <Tool name="zoomIn" />
            <Tool name="zoomOut" />
            <Combo label="Preview zoom" value="50%" width={58} plain />
            <SunkenButton type="button" aria-label="Tiles"><Icon name="tiles" /></SunkenButton>
            <Tool name="rock" disabled />
            <ShapeGap />
            <Tool name="stamp" disabled />
          </ShapeTools>
          <ShapePane>
            <ShapeGrid>
              {shapes.map(([label, kind, x, blockX], i) => (
                <ShapeItem key={i}>
                  <ShapeCard><ShapePreview kind={kind} x={x} blockX={blockX} /></ShapeCard>
                  <span>{label}</span>
                </ShapeItem>
              ))}
            </ShapeGrid>
            <ScrollBar before={0} thumb={308} after={0} />
          </ShapePane>
          <Tabs>
            <Tab type="button" $active>Ohne Verzögerung</Tab>
            <Tab type="button">Polarisiert, zeit...</Tab>
            <Tab type="button">Sicherheitsrelais</Tab>
            <Tab type="button" $cut>Schaltk</Tab>
            <ScrollButton type="button" aria-label="Previous tabs"><Arrow dir="left" /></ScrollButton>
            <ScrollButton type="button" aria-label="Next tabs"><Arrow dir="right" /></ScrollButton>
          </Tabs>
        </SidebarMain>
        <Gutter />
      </SidebarBody>
    </Sidebar>
  );
}

export default function App() {
  return (
    <Frame>
      <GlobalStyle />
      <TitleBar>
        <Icon name="app" />
        <TitleText>Bug dynamischer Bereich : AS 356 (Design-Modus) - Microsoft Visio</TitleText>
        <CaptionButton type="button" aria-label="Minimize"><svg width="9" height="9"><path d="M1 7.5h6" stroke="#000" strokeWidth="2" /></svg></CaptionButton>
        <CaptionButton type="button" aria-label="Maximize"><svg width="9" height="9"><path d="M.5 1h8v7.5h-8z" fill="none" stroke="#000" /><path d="M0 1h9" stroke="#000" strokeWidth="2" /></svg></CaptionButton>
        <CaptionButton type="button" aria-label="Close" $apart><CloseGlyph /></CaptionButton>
      </TitleBar>

      <MenuBar>
        <Grip />
        <Icon name="app" size={17} />
        {menus.map((m) => <MenuItem key={m} type="button"><Mnemonic text={m} /></MenuItem>)}
        <Push />
        <Question>
          <input type="text" aria-label="Frage hier eingeben" placeholder="Frage hier eingeben" />
          <Arrow small />
        </Question>
        <PlainButton type="button" aria-label="Minimize document"><svg width="9" height="9"><path d="M1 7h5" stroke="#000" strokeWidth="2" /></svg></PlainButton>
        <PlainButton type="button" aria-label="Restore document"><svg width="9" height="9"><path d="M2.5 3V1h6v4H6M.5 4h5v4.5h-5zM0 4h6M2 1h7" fill="none" stroke="#000" /></svg></PlainButton>
        <PlainButton type="button" aria-label="Close document"><CloseGlyph /></PlainButton>
      </MenuBar>

      <Toolbars />

      <Main>
        <Explorer />
        <DrawingWindow>
          <RulerCorner />
          <TopRuler>
            {range(120, 420, 10).map((n) => <TopLabel key={n}>{n}</TopLabel>)}
          </TopRuler>
          <SideRuler>
            {range(240, 40, -10).map((n) => <SideLabel key={n}>{n}</SideLabel>)}
          </SideRuler>
          <Canvas>
            <Sheet />
            <SizeWindow>
              <SizeHeader>
                <SizeTitle>Größe und P...</SizeTitle>
                <PinButton type="button" aria-label="Pin"><Icon name="pin" size={13} /></PinButton>
                <PlainButton type="button" aria-label="Close window"><CloseGlyph /></PlainButton>
              </SizeHeader>
              <SizeBody>Keine Auswahl</SizeBody>
            </SizeWindow>
          </Canvas>
          <VerticalScroll><ScrollBar before={307} thumb={252} after={286} /></VerticalScroll>
          <HorizontalScroll><ScrollBar horizontal before={509} thumb={308} after={390} /></HorizontalScroll>
        </DrawingWindow>
      </Main>

      <StatusBar>
        <StatusCell />
        <StatusCell />
        <StatusCell />
        <StatusCell />
        <Push />
        <StatusCell $page>Zeichenblatt 1/1</StatusCell>
      </StatusBar>
    </Frame>
  );
}

const GlobalStyle = createGlobalStyle`
  body {
    margin: 0;
    overflow: hidden;
  }

  *, *::before, *::after {
    box-sizing: border-box;
  }

  button, input, select {
    margin: 0;
    padding: 0;
    border: 0;
    border-radius: 0;
    background: none;
    color: inherit;
    font: inherit;
    outline: none;
  }

  svg {
    display: block;
    flex: none;
  }
`;

const raised = css`
  border: 1px solid;
  border-color: #fff #202020 #202020 #fff;
  background: #c0c0c0;
`;

const dither = css`
  background: repeating-conic-gradient(#fff 0 25%, #c8c8c8 0 50%) 0 0 / 2px 2px;
`;

const Frame = styled.div`
  display: flex;
  flex-direction: column;
  height: 100vh;
  padding: 0 4px;
  border-top: 4px solid #c8c8c8;
  border-bottom: 2px solid #181818;
  border-right: 1px solid #181818;
  background: linear-gradient(90deg, #c0c0c0, #f0f0f0 640px);
  font: 11px/16px ${UI_FONT};
  color: #000;
`;

const TitleBar = styled.header`
  display: flex;
  align-items: center;
  flex: none;
  height: 18px;
  padding: 0 2px 0 3px;
  background: linear-gradient(90deg, #000080, #1084d0);
  color: #fff;
`;

const TitleText = styled.h1`
  flex: 1;
  margin: 0 0 0 2px;
  font: bold 11px/18px ${BOLD_FONT};
  white-space: nowrap;
`;

const CaptionButton = styled.button`
  ${raised}
  display: flex;
  align-items: center;
  justify-content: center;
  width: 16px;
  height: 14px;
  margin-left: ${(props) => (props.$apart ? '2px' : 0)};
`;

const MenuBar = styled.nav`
  display: flex;
  align-items: center;
  flex: none;
  height: 24px;
  padding: 2px 0 0 6px;
`;

const MenuItem = styled.button`
  padding: 0 7px;
`;

const Push = styled.div`
  flex: 1;
`;

const Question = styled.label`
  display: flex;
  align-items: center;
  width: 148px;
  height: 18px;
  padding: 0 4px 0 2px;
  margin-right: 1px;
  background: #fff;

  input {
    flex: 1;
    min-width: 0;
  }

  input::placeholder {
    color: #808080;
    opacity: 1;
  }
`;

const PlainButton = styled.button`
  display: flex;
  align-items: center;
  justify-content: center;
  width: 17px;
  height: 17px;
`;

const ToolArea = styled.div`
  display: flex;
  flex-direction: column;
  flex: none;
  gap: 1px;
  padding: 2px 0 0 3px;
`;

const ToolRow = styled.div`
  display: flex;
  gap: 3px;
`;

const ToolBar = styled.div`
  display: flex;
  align-items: center;
  height: 25px;
  margin-right: ${(props) => (props.$last ? '231px' : 0)};
  padding: 0 0 1px 2px;
  border-radius: 3px;
  background: linear-gradient(#f2f2f2, #dcdcdc 50%, #bcbcbc);
`;

const Grip = styled.span`
  flex: none;
  width: 2px;
  height: 16px;
  margin-right: 3px;
  background: repeating-linear-gradient(#909090 0 2px, transparent 2px 4px);
`;

const Separator = styled.span`
  flex: none;
  width: 2px;
  height: 17px;
  margin: 0 2px;
  border-left: 1px solid #989898;
  border-right: 1px solid #fff;
`;

const ToolButton = styled.button`
  display: flex;
  align-items: center;
  justify-content: center;
  flex: none;
  width: 23px;
  height: 22px;
  border: 1px solid transparent;

  ${(props) =>
    props.$boxed &&
    css`
      border-color: #000080;
      background: #ccccda;
    `}
`;

const DropButton = styled.button`
  display: flex;
  align-items: center;
  justify-content: center;
  flex: none;
  width: 11px;
  height: 22px;

  &:disabled {
    color: #909090;
  }
`;

const TextButton = styled.button`
  display: flex;
  align-items: center;
  height: 22px;
  padding: 0 4px;
  white-space: nowrap;

  &:disabled {
    color: #909090;
  }

  svg:first-child {
    margin-right: 3px;
  }

  svg:last-child {
    margin-left: 2px;
  }
`;

const OverflowButton = styled.button`
  display: flex;
  align-items: flex-end;
  justify-content: center;
  width: 12px;
  height: 25px;
  margin: 0 0 -1px 1px;
  padding-bottom: 2px;
  border-radius: 0 3px 3px 0;
  background: linear-gradient(#a8a8a8, #707070);
`;

const Letter = styled.span`
  font-family: "Liberation Serif", serif;
  font-size: ${(props) => props.$size || 15}px;
  font-weight: ${(props) => (props.$bold ? 'bold' : 'normal')};
  font-style: ${(props) => (props.$italic ? 'italic' : 'normal')};
`;

const ColorLetter = styled.span`
  width: 16px;
  height: 16px;
  border-bottom: 4px solid #000;
  color: #385078;
  font: bold 15px/12px "Liberation Serif", serif;
`;

const ComboBox = styled.div`
  display: grid;
  grid-template-columns: 1fr 14px;
  flex: none;
  width: ${(props) => props.$width}px;
  height: ${(props) => (props.$plain ? 20 : 18)}px;
  margin-right: 1px;
  border: ${(props) => (props.$plain ? '1px solid #000' : 0)};
  background: #fff;

  select {
    grid-area: 1 / 1 / 2 / 3;
    padding-left: 3px;
    appearance: none;
  }
`;

const ComboArrow = styled.span`
  display: flex;
  align-items: center;
  justify-content: center;
  grid-area: 1 / 2;
  margin: 1px;
  background: linear-gradient(#f0f0f0, #c8c8c8);
  pointer-events: none;

  ${(props) => props.$raised && raised}
`;

const Main = styled.main`
  display: flex;
  flex: 1;
  min-height: 0;
`;

const Sidebar = styled.aside`
  display: flex;
  flex-direction: column;
  flex: none;
  width: 391px;
  padding: 1px 6px 3px 3px;
  background: #c4c4c4;
`;

const PanelHeader = styled.div`
  display: flex;
  align-items: center;
  justify-content: space-between;
  height: 24px;
  padding-left: 5px;
  background: linear-gradient(#dcdcdc, #c8c8c8);
`;

const PanelTitle = styled.h2`
  margin: 0;
  font: bold 11px/22px ${BOLD_FONT};
`;

const PanelTools = styled.div`
  display: flex;
  align-items: center;
  height: 23px;
  margin-bottom: 3px;
  padding-left: 4px;
  background: linear-gradient(#ececec, #c4c4c4);

  button {
    width: 22px;
  }
`;

const SidebarBody = styled.div`
  display: flex;
  flex: 1;
  gap: 5px;
  min-height: 0;
`;

const SidebarMain = styled.div`
  display: flex;
  flex-direction: column;
  flex: 1;
  min-width: 0;
`;

const Gutter = styled.div`
  width: 16px;
  border-top: 1px solid #000;
  border-left: 1px solid #000;
  background: #fff;
`;

const TreePane = styled.section`
  display: flex;
  flex: 447 1 0;
  flex-direction: column;
  min-height: 0;
  border: 1px solid #808080;
`;

const ProjectTitle = styled.div`
  flex: none;
  height: 18px;
  padding-left: 7px;
  border-bottom: 1px solid #808080;
  background: linear-gradient(#e4e4e4, #c4c4c4);
  line-height: 17px;
`;

const TreeFrame = styled.div`
  display: flex;
  flex: 1;
  min-height: 0;
  margin: 2px 2px 0 3px;
  border-right: 1px solid #000;
  border-bottom: 1px solid #000;
  background: #fff;
`;

const Tree = styled.ul`
  flex: 1;
  margin: 0;
  padding: 0;
  overflow: hidden;
  list-style: none;
`;

const TreeRow = styled.li`
  display: flex;
  align-items: center;
  height: 16px;
  padding-left: ${(props) => (props.$nested ? 84 : 64)}px;

  button + svg {
    margin: 0 2px 0 7px;
  }
`;

const TreeLabel = styled.span`
  padding: 0 3px 0 4px;
  background: ${(props) => (props.$selected ? '#c0c0c0' : 'none')};
`;

const Expander = styled.button`
  flex: none;
  width: 9px;
  height: 9px;
  border: 1px solid #808080;
`;

const Splitter = styled.div`
  flex: none;
  height: 8px;
  background: linear-gradient(#c0c0c0, #909090);

  &::after {
    content: '';
    display: block;
    width: 36px;
    height: 2px;
    margin: 3px auto 0;
    background: repeating-linear-gradient(90deg, #303030 0 2px, #e8e8e8 2px 4px);
  }
`;

const BookBar = styled.div`
  display: flex;
  align-items: center;
  justify-content: flex-end;
  flex: none;
  height: 33px;
  border-top: 1px solid #fff;
  background: linear-gradient(#f8f8f8, #c0c0c0);

  button {
    width: 22px;
  }

  button:first-child {
    height: 32px;
    background: #c4c4ce;
  }
`;

const ShapeTools = styled.div`
  display: flex;
  align-items: center;
  flex: none;
  height: 30px;
  padding-top: 2px;
`;

const SunkenButton = styled.button`
  ${dither}
  display: flex;
  align-items: center;
  justify-content: center;
  width: 22px;
  height: 21px;
  margin-left: 2px;
  border: 1px solid;
  border-color: #808080 #fff #fff #808080;
`;

const ShapeGap = styled.div`
  width: 22px;
`;

const ShapePane = styled.div`
  display: flex;
  flex: 344 1 0;
  min-height: 0;
  margin: 0 6px 0 5px;
  border: 1px solid;
  border-color: #000 #fff #fff #000;
  background: #c4d6ff;
`;

const ShapeGrid = styled.div`
  display: grid;
  grid-template-columns: repeat(auto-fill, 50px);
  grid-auto-rows: 66px;
  align-content: start;
  flex: 1;
  overflow: hidden;
  padding: 1px 0 0 1px;
`;

const ShapeItem = styled.div`
  display: flex;
  flex-direction: column;
  gap: 3px;

  span {
    padding-left: 2px;
    white-space: nowrap;
  }
`;

const ShapeCard = styled.div`
  flex: none;
  width: 47px;
  height: 46px;
  border: 1px solid #000;
  border-radius: 6px;
`;

const Tabs = styled.div`
  display: flex;
  flex: none;
  height: 22px;
  margin: 0 5px 0 4px;
  padding-top: 2px;
`;

const Tab = styled.button`
  ${raised}
  flex: none;
  height: ${(props) => (props.$active ? 20 : 18)}px;
  padding: 0 ${(props) => (props.$active ? 5 : 2)}px;
  border-top-color: ${(props) => (props.$active ? '#c0c0c0' : '#202020')};
  white-space: nowrap;

  ${(props) =>
    props.$cut &&
    css`
      flex: 1;
      min-width: 0;
      padding-right: 0;
      overflow: hidden;
      border-right: 0;
      text-align: left;
    `}
`;

const Scroll = styled.div`
  ${dither}
  display: flex;
  flex-direction: ${(props) => (props.$horizontal ? 'row' : 'column')};
  flex: none;
  ${(props) => (props.$horizontal ? 'height: 16px;' : 'width: 15px;')}
`;

const ScrollButton = styled.button`
  ${raised}
  display: flex;
  align-items: center;
  justify-content: center;
  flex: none;
  width: 16px;
  height: 16px;
  max-width: 100%;
`;

const ScrollGap = styled.div`
  flex: ${(props) => props.$grow} 1 0;
`;

const ScrollThumb = styled.div`
  ${raised}
  flex: ${(props) => props.$grow} 1 0;
`;

const DrawingWindow = styled.section`
  display: grid;
  grid-template-columns: 17px minmax(0, 1fr) 16px;
  grid-template-rows: 18px minmax(0, 1fr) 16px;
  flex: 1;
  min-width: 0;
  margin-right: 1px;
  background: #c8c8c8;
`;

const RulerCorner = styled.div`
  border: 1px solid #000;
  border-top-width: 2px;
  background:
    repeating-linear-gradient(90deg, #5068b8 0 1px, transparent 1px 2px) center / 100% 1px no-repeat,
    repeating-linear-gradient(#5068b8 0 1px, transparent 1px 2px) center / 1px 100% no-repeat,
    #fff;
`;

const TopRuler = styled.div`
  display: flex;
  padding-left: 7px;
  overflow: hidden;
  border-top: 2px solid #000;
  border-bottom: 1px solid #000;
  background:
    linear-gradient(90deg, #707070 1px, transparent 1px) 7px 0 / 40px 100%,
    linear-gradient(90deg, #707070 1px, transparent 1px) 27px 100% / 40px 9px repeat-x,
    linear-gradient(90deg, #808080 1px, transparent 1px) 3px 100% / 4px 6px repeat-x,
    linear-gradient(#fff, #c4c4c4);
`;

const TopLabel = styled.span`
  flex: none;
  width: 40px;
  padding-left: 1px;
  font-size: 10px;
  line-height: 10px;
`;

const SideRuler = styled.div`
  display: flex;
  flex-direction: column;
  grid-column: 1;
  padding-top: 23px;
  overflow: hidden;
  border-left: 1px solid #000;
  border-right: 1px solid #000;
  background:
    linear-gradient(#707070 1px, transparent 1px) 0 23px / 100% 40px,
    linear-gradient(#707070 1px, transparent 1px) 100% 43px / 9px 40px repeat-y,
    linear-gradient(#808080 1px, transparent 1px) 100% 3px / 6px 4px repeat-y,
    linear-gradient(90deg, #fff, #c4c4c4);
`;

const SideLabel = styled.span`
  flex: none;
  width: 14px;
  height: 40px;
  padding-bottom: 1px;
  font-size: 10px;
  line-height: 14px;
  text-align: right;
  writing-mode: vertical-rl;
  transform: rotate(180deg);
`;

const Canvas = styled.div`
  position: relative;
  overflow: hidden;
  background: linear-gradient(#808ca8, #686f90);
`;

const SheetSvg = styled.svg`
  border-right: 1px solid #202838;
  box-sizing: content-box;
`;

const SheetText = styled.text`
  fill: #222;
  stroke: none;
  font-family: ${UI_FONT};
  font-size: ${(props) => (props.$large ? 14 : props.$small ? 9 : 10)}px;
`;

const RelayLabel = styled.text`
  transform: rotate(-90deg);
  fill: #000;
  stroke: none;
  font: 7px ${UI_FONT};
`;

const VerticalScroll = styled.div`
  display: flex;
  grid-area: 1 / 3 / 3 / 4;
  border-top: 2px solid #000;
  border-right: 1px solid #000;
`;

const HorizontalScroll = styled.div`
  grid-area: 3 / 1 / 4 / 3;
`;

const SizeWindow = styled.div`
  position: absolute;
  left: 0;
  bottom: 0;
  display: flex;
  width: 200px;
  height: 133px;
  border: 1px solid #000;
  background: #c8c8c8;
`;

const SizeHeader = styled.div`
  display: flex;
  flex-direction: column;
  align-items: center;
  width: 20px;
  padding: 4px 0;
  background: linear-gradient(90deg, #f0f0f0, #c0c0c0);
`;

const SizeTitle = styled.h2`
  flex: 1;
  margin: 0;
  font: bold 11px/18px ${BOLD_FONT};
  white-space: nowrap;
  writing-mode: vertical-rl;
`;

const PinButton = styled.button`
  display: flex;
  align-items: center;
  justify-content: center;
  width: 18px;
  height: 18px;
  border: 1px solid #000080;
  background: #c8c8e0;
`;

const SizeBody = styled.div`
  display: flex;
  align-items: center;
  justify-content: center;
  flex: 1;
  margin: 3px 3px 3px 0;
  background: #fff;
`;

const StatusBar = styled.footer`
  display: flex;
  align-items: center;
  flex: none;
  gap: 6px;
  height: 24px;
  padding: 2px 17px 0 3px;
  background: linear-gradient(90deg, #c4c4c4, #f2f2f2);
`;

const StatusCell = styled.div`
  width: ${(props) => (props.$page ? 100 : 149)}px;
  height: 16px;
  border: 1px solid #a8a8a8;
  line-height: 14px;
  text-align: center;
`;
